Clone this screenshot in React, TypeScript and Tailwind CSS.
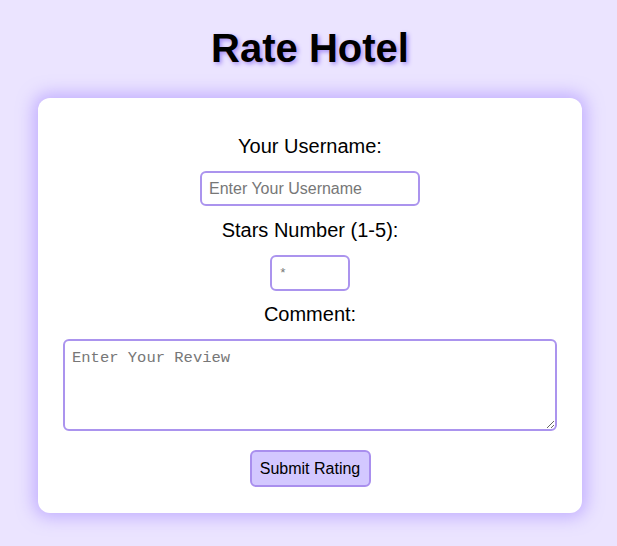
import React from 'react';

const App = () => {
  return (
    <div className="min-h-screen bg-[#ebe4ff] pt-[24px] pl-[3px] font-['Liberation_Sans',Arial,sans-serif]">
      <h1 className="text-center text-[40px] font-bold leading-[48px] text-black [text-shadow:2px_2px_4px_#a58cf5]">
        Rate Hotel
      </h1>

      <form
        className="mx-auto mt-[26px] flex w-[544px] flex-col items-center rounded-xl bg-white px-[25px] pt-[37px] pb-[26px] shadow-[0_0_16px_5px_rgba(160,130,255,0.5)]"
        onSubmit={(e) => e.preventDefault()}
      >
        <label htmlFor="username" className="text-[20px] leading-[23px] text-black">
          Your Username:
        </label>
        <input
          id="username"
          type="text"
          placeholder="Enter Your Username"
          className="mt-[13px] h-[35px] w-[220px] rounded-md border-2 border-[#ab94ee] px-[7px] text-[16px] text-black outline-none placeholder:text-[#777]"
        />

        <label htmlFor="stars" className="mt-[13px] text-[20px] leading-[23px] text-black">
          Stars Number (1-5):
        </label>
        <input
          id="stars"
          type="number"
          min={1}
          max={5}
          placeholder="*"
          className="mt-[13px] h-[36px] w-[80px] rounded-md border-2 border-[#ab94ee] px-[7px] font-['Liberation_Mono',monospace] text-[13px] text-black outline-none placeholder:text-[#777]"
        />

        <label htmlFor="comment" className="mt-[12px] text-[20px] leading-[23px] text-black">
          Comment:
        </label>
        <textarea
          id="comment"
          placeholder="Enter Your Review"
          className="mt-[13px] h-[92px] w-full rounded-md border-2 border-[#ab94ee] px-[7px] py-[6px] font-['Liberation_Mono',monospace] text-[15.5px] text-black outline-none placeholder:text-[#777]"
        />

        <button
          type="submit"
          className="mt-[19px] h-[37px] w-[121px] rounded-md border-2 border-[#a98fee] bg-[#d3c8ff] text-[16px] text-black"
        >
          Submit Rating
        </button>
      </form>
    </div>
  );
};

export default App;
